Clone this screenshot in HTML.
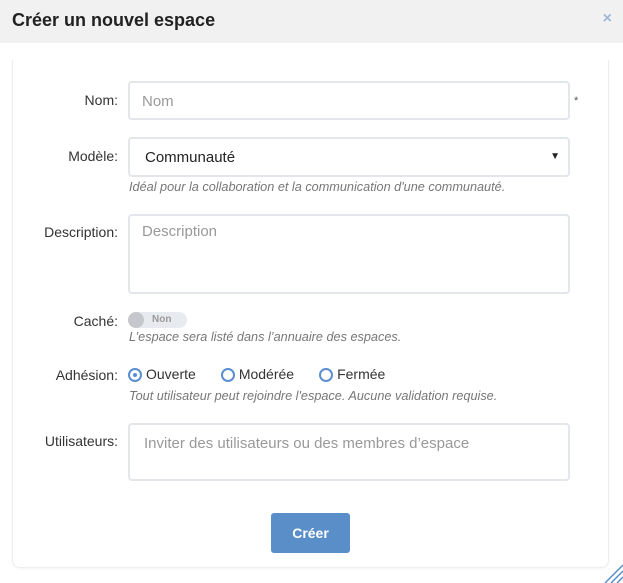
<!DOCTYPE html><html><head><style>
body{margin:0;width:623px;height:583px;background:#fff;font-family:"Liberation Sans",sans-serif;position:relative;overflow:hidden;color:#333}
.hd{position:absolute;left:0;top:0;width:623px;height:43px;background:#f1f1f1}
.hd h1{position:absolute;left:12px;top:10px;margin:0;font-size:18px;font-weight:bold;color:#222}
.x{position:absolute;right:11px;top:10px;color:#9fb8d8;font-size:16px;font-weight:bold}
.card{position:absolute;left:12px;top:60px;width:595px;height:507px;border:1px solid #eee;border-top:none;border-radius:0 0 8px 8px;box-shadow:0 1px 2px rgba(0,0,0,.05)}
.lb{position:absolute;right:505px;font-size:14px;color:#333;text-align:right}
.in{position:absolute;left:128px;width:442px;border:2px solid #e3e6ea;border-radius:4px;box-sizing:border-box;font-size:15px;color:#999;padding:10px 12px}
.hp{position:absolute;left:129px;font-size:12.7px;font-style:italic;color:#777}
.rd{display:inline-block;width:10px;height:10px;border:2px solid #5a8ed0;border-radius:50%;vertical-align:-3px;margin-right:4px;position:relative}
.rd.on::after{content:"";position:absolute;left:3px;top:3px;width:4px;height:4px;border-radius:50%;background:#5a8ed0}
</style></head><body>
<div class="hd"><h1>Créer un nouvel espace</h1><div class="x">×</div></div>
<div class="card"></div>
<div class="lb" style="top:92px">Nom:</div>
<div class="in" style="top:81px;height:39px">Nom</div>
<div style="position:absolute;left:574px;top:95px;font-size:11px;color:#555">*</div>
<div class="lb" style="top:148px">Modèle:</div>
<div class="in" style="top:137px;height:40px;color:#222;padding-left:15px">Communauté<span style="position:absolute;right:8px;top:12px;font-size:10px">▼</span></div>
<div class="hp" style="top:180px">Idéal pour la collaboration et la communication d'une communauté.</div>
<div class="lb" style="top:224px">Description:</div>
<div class="in" style="top:214px;height:80px;padding-top:7px">Description</div>
<div class="lb" style="top:313px">Caché:</div>
<div style="position:absolute;left:128px;top:312px;width:59px;height:16px;border-radius:8px;background:#e7eaee"><div style="position:absolute;left:0;top:0;width:16px;height:16px;border-radius:50%;background:#c4c8cd"></div><span style="position:absolute;left:24px;top:2px;font-size:10px;font-weight:bold;color:#999">Non</span></div>
<div class="hp" style="top:330px">L’espace sera listé dans l’annuaire des espaces.</div>
<div class="lb" style="top:367px">Adhésion:</div>
<div style="position:absolute;left:128px;top:366px;font-size:14px;color:#333"><span class="rd on"></span>Ouverte<span style="display:inline-block;width:25px"></span><span class="rd"></span>Modérée<span style="display:inline-block;width:25px"></span><span class="rd"></span>Fermée</div>
<div class="hp" style="top:389px">Tout utilisateur peut rejoindre l'espace. Aucune validation requise.</div>
<div class="lb" style="top:433px">Utilisateurs:</div>
<div class="in" style="top:423px;height:58px;padding-left:14px">Inviter des utilisateurs ou des membres d’espace</div>
<div style="position:absolute;left:271px;top:513px;width:79px;height:40px;background:#5a8ec9;border-radius:3px;color:#fff;font-weight:bold;font-size:14px;text-align:center;line-height:40px">Créer</div>
<svg style="position:absolute;left:603px;top:563px" width="20" height="20"><path d="M2 20L20 2M8 20L20 8M14 20L20 14" stroke="#5a8ec9" stroke-width="1.5"/></svg>
</body></html>
